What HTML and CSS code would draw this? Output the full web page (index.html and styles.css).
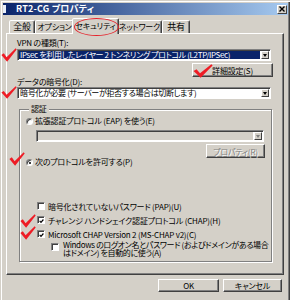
FILE: index.html
```html
<!DOCTYPE html>
<html lang="ja">
<head>
<meta charset="utf-8">
<title>RT2-CG プロパティ</title>
<link rel="stylesheet" href="styles.css">
</head>
<body>
<div class="win">
  <div class="titlebar">
    <span class="ticon"></span>
    <span class="ttext">RT2-CG プロパティ</span>
    <span class="close"><svg viewBox="0 0 6 6" width="6" height="6"><path d="M0.5 0.5 L5.5 5.5 M5.5 0.5 L0.5 5.5" stroke="#000" stroke-width="1.4"/></svg></span>
  </div>
  <div class="tabs">
    <div class="tab t1">全般</div>
    <div class="tab t2">オプション</div>
    <div class="tab sel">セキュリティ</div>
    <div class="tab t4">ネットワーク</div>
    <div class="tab t5">共有</div>
  </div>
  <div class="panel">
    <div class="label">VPN の種類(T):</div>
    <div class="combo">
      <div class="field"><span class="hl">IPsec を利用したレイヤー 2 トンネリング プロトコル (L2TP/IPSec)</span></div>
      <div class="arrow"><span class="tri"></span></div>
    </div>
    <button class="btn adv">詳細設定(S)</button>
    <div class="label">データの暗号化(D):</div>
    <div class="combo">
      <div class="field">暗号化が必要 (サーバーが拒否する場合は切断します)</div>
      <div class="arrow"><span class="tri"></span></div>
    </div>
    <fieldset class="group">
      <legend>認証</legend>
      <div class="opt"><span class="radio"></span>拡張認証プロトコル (EAP) を使う(E)</div>
      <div class="combo dis">
        <div class="field"></div>
        <div class="arrow"><span class="tri"></span></div>
      </div>
      <button class="btn prop">プロパティ(R)</button>
      <div class="opt opt2"><span class="radio on"></span>次のプロトコルを許可する(P)</div>
      <div class="checks">
        <div class="chk"><span class="box"></span>暗号化されていないパスワード (PAP)(U)</div>
        <div class="chk"><span class="box on"><svg viewBox="0 0 6 6" width="6" height="6"><path d="M0.8 2.8 L2.4 4.6 L5.3 1.2" fill="none" stroke="#000" stroke-width="1.4"/></svg></span>チャレンジ ハンドシェイク認証プロトコル (CHAP)(H)</div>
        <div class="chk"><span class="box on"><svg viewBox="0 0 6 6" width="6" height="6"><path d="M0.8 2.8 L2.4 4.6 L5.3 1.2" fill="none" stroke="#000" stroke-width="1.4"/></svg></span>Microsoft CHAP Version 2 (MS-CHAP v2)(C)</div>
        <div class="chk sub"><span class="box"></span><span class="multi">Windows のログオン名とパスワード (およびドメインがある場合<br>はドメイン) を自動的に使う(A)</span></div>
      </div>
    </fieldset>
  </div>
  <div class="footer">
    <button class="btn ok">OK</button>
    <button class="btn cancel">キャンセル</button>
  </div>

  <div class="ellipse"></div>
  <svg class="rc rc1" viewBox="0 0 16 13" preserveAspectRatio="none"><path d="M0.4 6.4 L2.8 4.9 L5.6 8.7 L14.7 0.2 L15.7 1.3 L6.1 12.8 Z"/></svg>
  <svg class="rc rc2" viewBox="0 0 16 13" preserveAspectRatio="none"><path d="M0.4 6.4 L2.8 4.9 L5.6 8.7 L14.7 0.2 L15.7 1.3 L6.1 12.8 Z"/></svg>
  <svg class="rc rc3" viewBox="0 0 16 13" preserveAspectRatio="none"><path d="M0.4 6.4 L2.8 4.9 L5.6 8.7 L14.7 0.2 L15.7 1.3 L6.1 12.8 Z"/></svg>
  <svg class="rc rc4" viewBox="0 0 16 13" preserveAspectRatio="none"><path d="M0.4 6.4 L2.8 4.9 L5.6 8.7 L14.7 0.2 L15.7 1.3 L6.1 12.8 Z"/></svg>
  <svg class="rc rc5" viewBox="0 0 16 13" preserveAspectRatio="none"><path d="M0.4 6.4 L2.8 4.9 L5.6 8.7 L14.7 0.2 L15.7 1.3 L6.1 12.8 Z"/></svg>
  <svg class="rc rc6" viewBox="0 0 16 13" preserveAspectRatio="none"><path d="M0.4 6.4 L2.8 4.9 L5.6 8.7 L14.7 0.2 L15.7 1.3 L6.1 12.8 Z"/></svg>
</div>
</body>
</html>
```
FILE: styles.css
```css
html, body {
  margin: 0;
  padding: 0;
  overflow: hidden;
}
body {
  width: 290px;
  height: 300px;
  font-family: "Noto Sans CJK JP", "Liberation Sans", sans-serif;
  font-size: 8px;
  letter-spacing: -0.2px;
  font-feature-settings: "palt" 1;
  color: #000;
}
.win {
  position: relative;
  box-sizing: border-box;
  width: 290px;
  height: 300px;
  background: #d4d0c8;
  padding: 3px 2px 0 3px;
  display: flex;
  flex-direction: column;
  box-shadow: inset 1px 1px #d4d0c8, inset 2px 2px #fff, inset -1px 0 #404040, inset -2px 0 #808080;
}

/* title bar */
.titlebar {
  height: 12px;
  display: flex;
  align-items: center;
  background: linear-gradient(to right, #0a246a, #a6caf0);
  color: #fff;
  font-weight: bold;
  font-size: 9px;
  letter-spacing: 0.2px;
}
.ticon {
  width: 3px;
  height: 8px;
  background: #e8eef8;
}
.ttext {
  margin-left: 10px;
  line-height: 12px;
}
.close {
  margin-left: auto;
  margin-right: 1px;
  box-sizing: border-box;
  width: 10px;
  height: 9px;
  background: #d4d0c8;
  border: 1px solid;
  border-color: #fff #404040 #404040 #fff;
  display: flex;
  align-items: center;
  justify-content: center;
}

/* tabs */
.tabs {
  display: flex;
  align-items: flex-end;
  height: 15px;
  margin-top: 3px;
  padding-left: 6px;
  position: relative;
  z-index: 1;
}
.tab {
  box-sizing: border-box;
  height: 13px;
  border: 1px solid;
  border-bottom: 0;
  border-color: #fff #404040 transparent #fff;
  border-radius: 2px 2px 0 0;
  box-shadow: inset -1px 0 #808080;
  text-align: center;
  line-height: 12px;
  white-space: nowrap;
  background: #d4d0c8;
}
.t1 { width: 26px; font-size: 9px; }
.t2 { width: 39px; }
.t4 { width: 45px; }
.t5 { width: 28px; font-size: 9px; }
.sel {
  width: 47px;
  height: 16px;
  margin: 0 -2px -1px;
  line-height: 14px;
  position: relative;
  z-index: 2;
}

/* panel */
.panel {
  box-sizing: border-box;
  height: 242px;
  margin: 0 4px 0 3px;
  border: 1px solid;
  border-color: #fff #404040 #404040 #fff;
  box-shadow: inset -1px -1px #808080;
  padding: 4px 10px 0 10px;
  display: flex;
  flex-direction: column;
}
.label {
  height: 10px;
  line-height: 10px;
  white-space: nowrap;
}
.combo {
  box-sizing: border-box;
  height: 12px;
  margin: 1px 2px 0 0;
  border: 1px solid;
  border-color: #808080 #fff #fff #808080;
  box-shadow: inset 1px 1px #404040;
  background: #fff;
  padding: 1px;
  display: flex;
}
.label + .combo + .btn + .label + .combo { margin-top: 0; }
.field {
  flex: 1;
  min-width: 0;
  line-height: 8px;
  padding-left: 1px;
  white-space: nowrap;
  margin-right: 1px;
  letter-spacing: -0.35px;
}
.field:has(.hl) {
  background: #0a246a;
}
.hl {
  color: #fff;
}
.arrow {
  box-sizing: border-box;
  flex: none;
  width: 8px;
  height: 8px;
  background: #d4d0c8;
  border: 1px solid;
  border-color: #fff #404040 #404040 #fff;
  display: flex;
  align-items: center;
  justify-content: center;
}
.tri {
  width: 0;
  height: 0;
  border-left: 2.5px solid transparent;
  border-right: 2.5px solid transparent;
  border-top: 3px solid #000;
}
.dis .field { background: #d4d0c8; }
.dis .tri { border-top-color: #808080; }

.btn {
  box-sizing: border-box;
  height: 14px;
  padding: 0;
  margin: 0;
  border: 1px solid;
  border-color: #fff #404040 #404040 #fff;
  box-shadow: inset -1px -1px #808080;
  background: #d4d0c8;
  font: inherit;
  letter-spacing: inherit;
  font-feature-settings: inherit;
  line-height: 11px;
  color: #000;
  text-align: center;
  white-space: nowrap;
}
.adv {
  width: 81px;
  margin: 2px 0 0 auto;
}

/* group */
.group {
  margin: 5px 1px 0 2px;
  padding: 2px 6px 4px 6px;
  border: 1px solid #808080;
  box-shadow: inset 1px 1px #fff, 1px 1px #fff;
  min-width: 0;
  display: flex;
  flex-direction: column;
}
.group legend {
  padding: 0 2px;
  margin-left: 3px;
  line-height: 10px;
  background: #d4d0c8;
}
.opt {
  height: 10px;
  line-height: 10px;
  display: flex;
  align-items: center;
  white-space: nowrap;
}
.opt2 {
  height: 8px;
  line-height: 8px;
}
.radio {
  box-sizing: border-box;
  width: 7px;
  height: 7px;
  border-radius: 50%;
  border: 1px solid;
  border-color: #808080 #fff #fff #808080;
  box-shadow: inset 1px 1px #404040;
  background: #fff;
  margin-right: 2px;
  display: flex;
  align-items: center;
  justify-content: center;
}
.radio.on::after {
  content: "";
  width: 2px;
  height: 2px;
  margin: 1px 0 0 1px;
  border-radius: 50%;
  background: #000;
}
.group .combo {
  margin: 4px 1px 0 10px;
}
.prop {
  width: 59px;
  margin: 2px 0 0 auto;
  color: #808080;
  text-shadow: 1px 1px #fff;
}
.checks {
  margin-top: 33px;
  display: flex;
  flex-direction: column;
}
.chk {
  height: 14px;
  display: flex;
  align-items: center;
  white-space: nowrap;
  padding-left: 11px;
}
.box {
  box-sizing: border-box;
  width: 8px;
  height: 8px;
  flex: none;
  border: 1px solid;
  border-color: #808080 #fff #fff #808080;
  box-shadow: inset 1px 1px #404040;
  background: #fff;
  margin-right: 3px;
  display: flex;
  align-items: center;
  justify-content: center;
}
.box svg { margin: 1px 0 0 1px; }
.sub {
  height: 16px;
  align-items: flex-start;
  padding-left: 25px;
}
.sub .box {
  margin-top: 2px;
  margin-right: 4px;
}
.multi {
  line-height: 8px;
  letter-spacing: -0.35px;
}

/* footer */
.footer {
  display: flex;
  justify-content: flex-end;
  gap: 4px;
  margin: 4px 6px 0 0;
}
.footer .btn {
  height: 13px;
  line-height: 11px;
}
.ok { width: 61px; }
.cancel { width: 59px; }

/* red annotations */
.ellipse {
  position: absolute;
  left: 74px;
  top: 18px;
  width: 43px;
  height: 16px;
  border: 1px solid #e5222b;
  border-radius: 50%;
  z-index: 5;
}
.rc {
  position: absolute;
  fill: #ee1c25;
  z-index: 5;
}
.rc1 { left: 1px; top: 48px; width: 16px; height: 14px; }
.rc2 { left: 1px; top: 86px; width: 16px; height: 13px; }
.rc3 { left: 193px; top: 64px; width: 20px; height: 14px; }
.rc4 { left: 9px; top: 152px; width: 16px; height: 14px; }
.rc5 { left: 20px; top: 214px; width: 16px; height: 14px; }
.rc6 { left: 20px; top: 226px; width: 16px; height: 14px; }
```
